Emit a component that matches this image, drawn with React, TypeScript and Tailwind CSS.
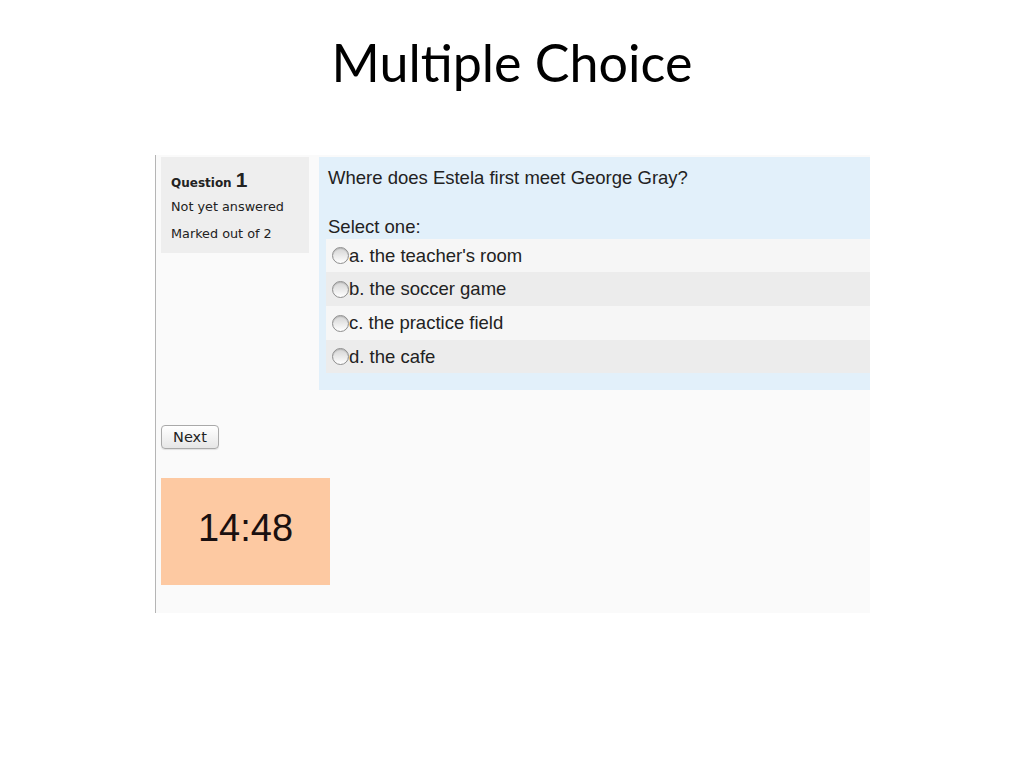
import React from "react";

function Radio() {
  return (
    <span className="inline-block w-[17px] h-[17px] rounded-full border border-[#8e8e8e] bg-gradient-to-b from-[#d4d4d4] to-[#ffffff] shadow-[inset_0_1px_1px_rgba(0,0,0,0.15)] shrink-0" />
  );
}

const answers = [
  { t: "a. the teacher's room", bg: "bg-[#f6f6f6]", h: "h-[33px]" },
  { t: "b. the soccer game", bg: "bg-[#ececec]", h: "h-[34px]" },
  { t: "c. the practice field", bg: "bg-[#f6f6f6]", h: "h-[34px]" },
  { t: "d. the cafe", bg: "bg-[#ececec]", h: "h-[33px]" },
];

export default function App() {
  return (
    <div className="w-[1024px] h-[768px] bg-white overflow-hidden">
      <h1 className="text-center pt-[30px] h-[155px] text-[52px] leading-[64px] text-black font-['Lato',sans-serif] font-normal">
        Multiple Choice
      </h1>
      <div className="ml-[155px] w-[715px] h-[458px] border-l border-[#b5b5b5] bg-[#fafafa] pt-[2px]">
        <div className="flex items-start">
          <div className="ml-[5px] w-[148px] h-[96px] bg-[#eeeeee] pl-[10px] pt-[12px] font-['DejaVu_Sans',sans-serif] text-[#222]">
            <div className="flex items-baseline h-[22px]">
              <span className="text-[12px] font-bold">Question</span>
              <span className="text-[21px] font-bold ml-[4px] leading-none font-['Liberation_Sans',sans-serif]">1</span>
            </div>
            <div className="text-[12.8px] mt-[8px] leading-[16px]">Not yet answered</div>
            <div className="text-[12.8px] mt-[11px] leading-[16px]">Marked out of 2</div>
          </div>
          <div className="ml-[10px] flex-1 h-[233px] bg-[#e2f0fa] font-['Liberation_Sans',sans-serif] text-[#222]">
            <div className="pl-[9px] pt-[11px] text-[18.5px] leading-[20px]">Where does Estela first meet George Gray?</div>
            <div className="pl-[9px] pt-[29px] text-[18.5px] leading-[20px] h-[51px]">Select one:</div>
            <div className="ml-[7px]">
              {answers.map((a) => (
                <div key={a.t} className={`${a.bg} ${a.h} flex items-center pl-[6px] text-[18.5px]`}>
                  <Radio />
                  <span>{a.t}</span>
                </div>
              ))}
            </div>
          </div>
        </div>
        <div className="ml-[5px] mt-[34px]">
          <button className="w-[58px] h-[24px] rounded-[4px] border border-[#a9a9a9] bg-gradient-to-b from-[#ffffff] to-[#e6e6e6] text-[14.5px] text-[#222] font-['DejaVu_Sans',sans-serif] leading-none shadow-[0_1px_1px_rgba(0,0,0,0.1)]">
            Next
          </button>
        </div>
        <div className="ml-[5px] mt-[29px] w-[169px] h-[107px] bg-[#fdc9a2] flex items-center justify-center pb-[6px] text-[38px] text-[#1a1010] font-['Liberation_Sans',sans-serif]">
          14:48
        </div>
      </div>
    </div>
  );
}
